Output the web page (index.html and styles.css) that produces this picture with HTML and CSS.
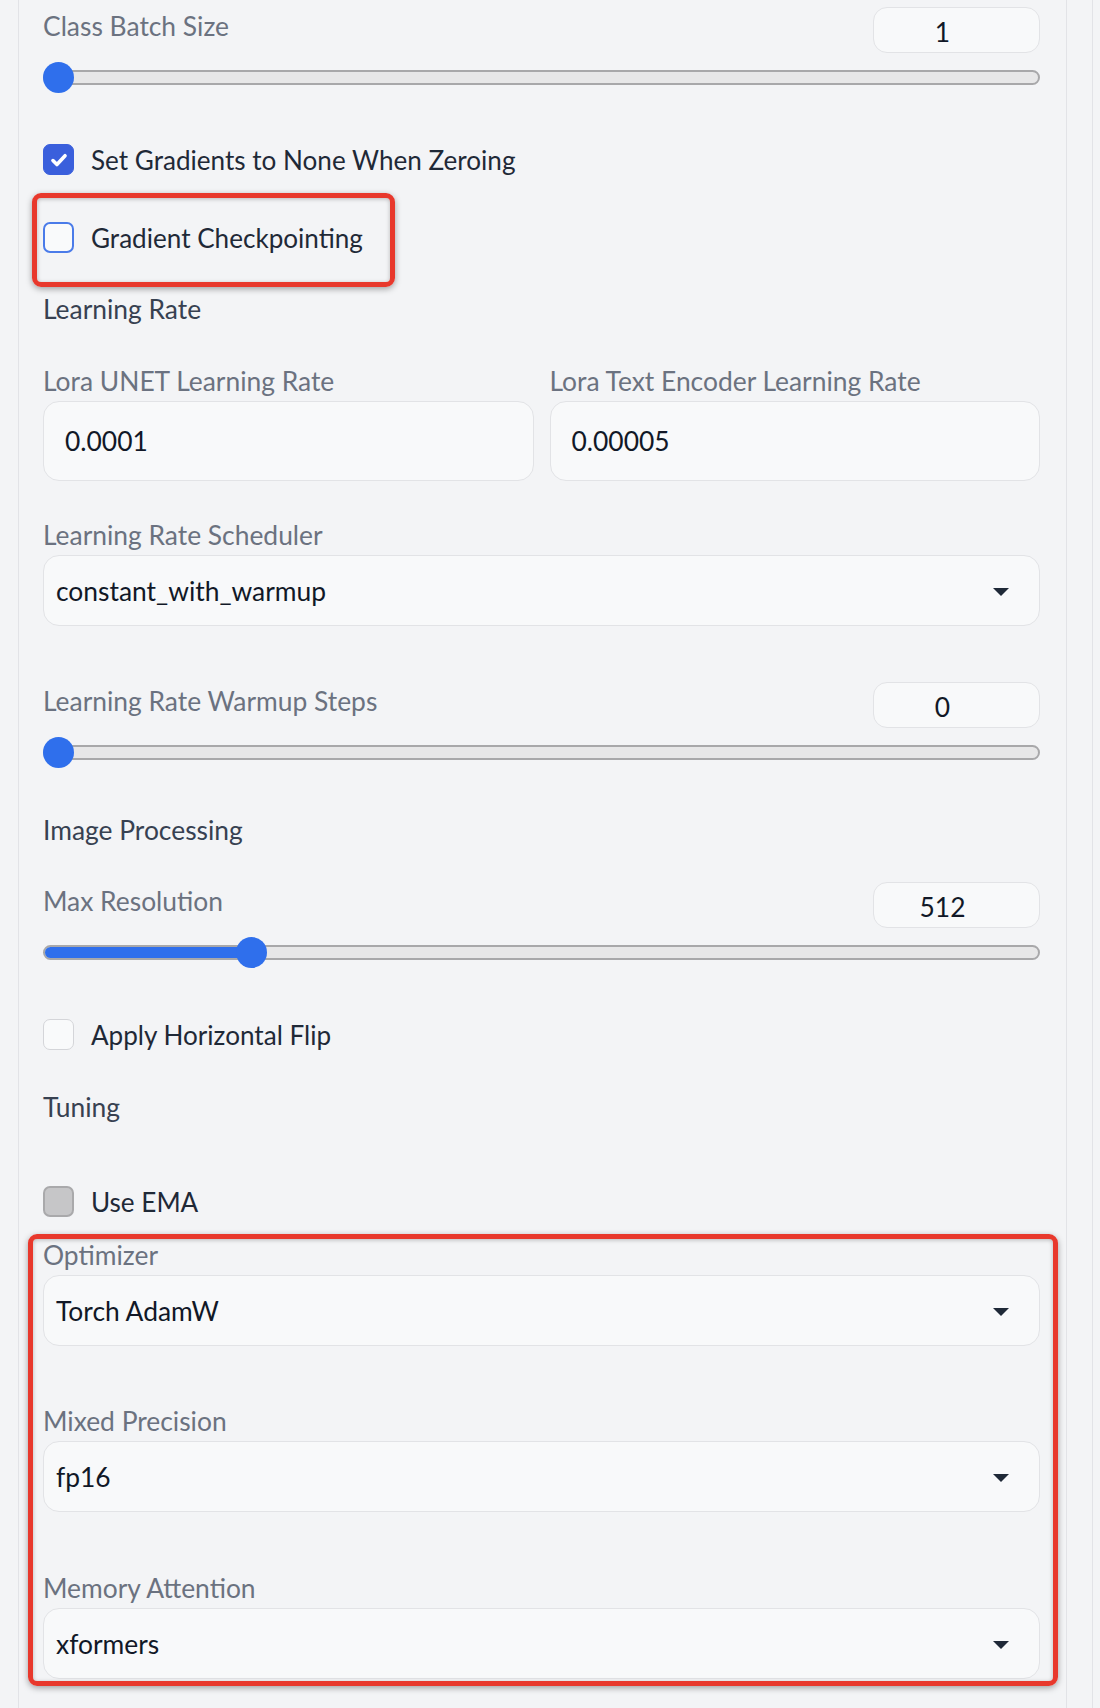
FILE: index.html
```html
<!DOCTYPE html>
<html>
<head>
<meta charset="utf-8">
<link rel="stylesheet" href="styles.css">
</head>
<body>
<div class="page">
  <div class="panel">
    <div class="slider s-first">
      <div class="slider-head"><span class="label">Class Batch Size</span><div class="num">1</div></div>
      <div class="range" style="--p:0"><div class="track"><div class="fill"></div></div><div class="thumb"></div></div>
    </div>

    <div class="check-row cr-1"><span class="box checked"><svg viewBox="0 0 16 16" width="22" height="22"><path d="M3.6 8.4l2.9 2.9 5.9-6.4" fill="none" stroke="#fff" stroke-width="2.6" stroke-linecap="round" stroke-linejoin="round"/></svg></span><span class="check-text">Set Gradients to None When Zeroing</span></div>
    <div class="check-row cr-2"><span class="box focused"></span><span class="check-text">Gradient Checkpointing</span></div>

    <div class="section sec-lr">Learning Rate</div>

    <div class="two-col">
      <div class="field">
        <div class="label">Lora UNET Learning Rate</div>
        <div class="input">0.0001</div>
      </div>
      <div class="field">
        <div class="label">Lora Text Encoder Learning Rate</div>
        <div class="input">0.00005</div>
      </div>
    </div>

    <div class="field f-sched">
      <div class="label">Learning Rate Scheduler</div>
      <div class="dropdown"><span>constant_with_warmup</span><span class="caret"></span></div>
    </div>

    <div class="slider s-warm">
      <div class="slider-head"><span class="label">Learning Rate Warmup Steps</span><div class="num">0</div></div>
      <div class="range" style="--p:0"><div class="track"><div class="fill"></div></div><div class="thumb"></div></div>
    </div>

    <div class="section sec-img">Image Processing</div>

    <div class="slider s-res">
      <div class="slider-head"><span class="label">Max Resolution</span><div class="num">512</div></div>
      <div class="range" style="--p:0.2"><div class="track"><div class="fill"></div></div><div class="thumb"></div></div>
    </div>

    <div class="check-row cr-flip"><span class="box"></span><span class="check-text">Apply Horizontal Flip</span></div>

    <div class="section sec-tune">Tuning</div>

    <div class="check-row cr-ema"><span class="box disabled"></span><span class="check-text">Use EMA</span></div>

    <div class="field f-opt">
      <div class="label">Optimizer</div>
      <div class="dropdown"><span>Torch AdamW</span><span class="caret"></span></div>
    </div>
    <div class="field f-mix">
      <div class="label">Mixed Precision</div>
      <div class="dropdown"><span>fp16</span><span class="caret"></span></div>
    </div>
    <div class="field f-mem">
      <div class="label">Memory Attention</div>
      <div class="dropdown"><span>xformers</span><span class="caret"></span></div>
    </div>

    <div class="annot annot-1"></div>
    <div class="annot annot-2"></div>
  </div>
</div>
</body>
</html>
```

FILE: styles.css
```css
html, body {
  margin: 0;
  padding: 0;
  background: #f3f4f6;
}
body {
  font-family: Lato, "Noto Sans", sans-serif;
  font-size: 26.4px;
  line-height: 32px;
  color: #1f2937;
}
.page {
  width: 1092px;
  min-height: 1708px;
  border-right: 1px solid #e2e3e7;
  overflow: hidden;
}
.panel {
  position: relative;
  margin-left: 18px;
  width: 997px;
  min-height: 1708px;
  padding: 7px 26px 0 24px;
  border-left: 1px solid #e2e3e7;
  border-right: 1px solid #e2e3e7;
}
.label {
  display: block;
  color: #6b7280;
}
.section {
  color: #374151;
}
.check-text {
  font-size: 26.1px;
}

/* sliders */
.slider-head {
  display: flex;
  justify-content: space-between;
  align-items: flex-start;
  height: 46px;
}
.slider-head .label {
  margin-top: 3px;
}
.num {
  box-sizing: border-box;
  width: 167px;
  height: 46px;
  padding-right: 28px;
  border: 1.5px solid #e2e3e6;
  border-radius: 14px;
  background: #f8f9fa;
  color: #111827;
  text-align: center;
  line-height: 48px;
}
.range {
  position: relative;
  box-sizing: border-box;
  height: 31px;
  padding-top: 8px;
  margin-top: 9px;
}
.track {
  position: relative;
  box-sizing: border-box;
  height: 15px;
  border: 2px solid #a8a8aa;
  border-radius: 8px;
  background: #e7e7e8;
  overflow: hidden;
}
.fill {
  position: absolute;
  left: -2px;
  top: -2px;
  bottom: -2px;
  width: calc((100% - 31px) * var(--p) + 17px);
  background: #2f6fec;
  border-radius: 8px 0 0 8px;
}
.thumb {
  position: absolute;
  top: 0;
  left: calc((100% - 31px) * var(--p));
  width: 31px;
  height: 31px;
  border-radius: 50%;
  background: #2f6fec;
}

/* checkboxes */
.check-row {
  display: flex;
  align-items: center;
  height: 31px;
  color: #1f2937;
}
.box {
  box-sizing: border-box;
  width: 31px;
  height: 31px;
  border-radius: 7px;
  border: 1.5px solid #d4d5d9;
  background: #f9fafb;
  margin-right: 17px;
  display: flex;
  align-items: center;
  justify-content: center;
  flex: none;
}
.box.checked {
  background: #3a5fdc;
  border-color: #3a5fdc;
}
.box.focused {
  border: 2px solid #4a7be9;
  background: #f9fafb;
}
.box.disabled {
  background: #c6c6c8;
  border: 2px solid #a9a9ab;
}

/* fields */
.two-col {
  display: flex;
  gap: 16px;
}
.two-col .field {
  flex: 1;
}
.input {
  box-sizing: border-box;
  height: 80px;
  margin-top: 4px;
  padding-left: 21px;
  border: 1.5px solid #e2e3e6;
  border-radius: 16px;
  background: #f8f9fa;
  color: #111827;
  display: flex;
  align-items: center;
}
.dropdown {
  box-sizing: border-box;
  height: 71px;
  margin-top: 4px;
  padding: 0 30px 0 12px;
  border: 1.5px solid #e2e3e6;
  border-radius: 16px;
  background: #f8f9fa;
  color: #111827;
  display: flex;
  align-items: center;
  justify-content: space-between;
}
.caret {
  width: 0;
  height: 0;
  border-left: 8px solid transparent;
  border-right: 8px solid transparent;
  border-top: 8px solid #1f2937;
  margin-top: 3px;
}

/* vertical rhythm */
.s-first { margin-top: 0; }
.cr-1 { margin-top: 51px; }
.cr-2 { margin-top: 47px; }
.sec-lr { margin-top: 40px; }
.two-col { margin-top: 40px; }
.f-sched { margin-top: 38px; }
.s-warm { margin-top: 56px; }
.sec-img { margin-top: 46px; }
.s-res { margin-top: 36px; }
.cr-flip { margin-top: 51px; }
.sec-tune { margin-top: 41px; }
.cr-ema { margin-top: 63px; }
.f-opt { margin-top: 22px; }
.f-mix { margin-top: 59px; }
.f-mem { margin-top: 60px; }

/* annotations */
.annot {
  position: absolute;
  box-sizing: border-box;
  border: 5px solid #e8382c;
  border-radius: 9px;
  box-shadow: 0 2px 6px rgba(0, 0, 0, 0.35), inset 0 1px 4px rgba(0, 0, 0, 0.25);
}
.annot-1 {
  left: 13px;
  top: 193px;
  width: 363px;
  height: 94px;
}
.annot-2 {
  left: 9px;
  top: 1234px;
  width: 1030px;
  height: 452px;
}
```
